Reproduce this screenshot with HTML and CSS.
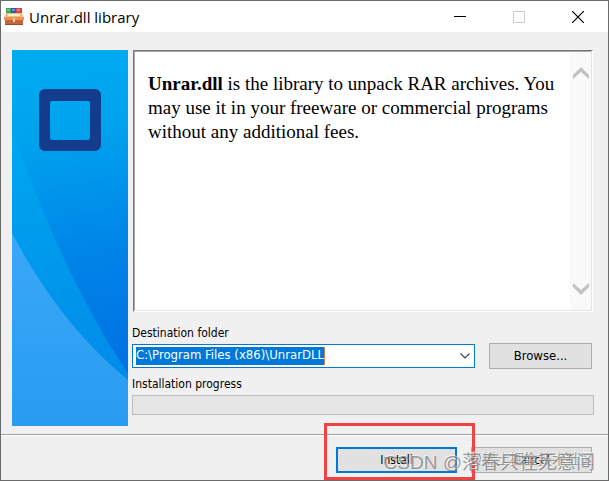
FILE: index.html
```html
<!DOCTYPE html>
<html lang="en">
<head>
<meta charset="utf-8">
<title>Unrar.dll library</title>
<link rel="stylesheet" href="styles.css">
</head>
<body>
<main class="window">
  <header class="titlebar">
    <svg class="app-icon" viewBox="0 0 20 20" aria-hidden="true">
      <path d="M2 1h16v8H2z" fill="#3f7d78"/>
      <path d="M2 1h5v8H2z" fill="#3aa655"/>
      <path d="M7 1h5v8H7z" fill="#3154c4"/>
      <path d="M12 1h5v8h-5z" fill="#d8434e"/>
      <path d="M3 3h3M8 3h3M13 3h3" stroke="#a9d7c9"/>
      <path d="M2 6h16l2 5H0z" fill="#f3bd79"/>
      <path d="M4 7h12v2H4z" fill="#fff0c4"/>
      <path d="M1 11h18v7H1z" fill="#c9643a"/>
      <path d="M0 10h20v3H0z" fill="#e7935a"/>
      <path d="M9 11h2v4H9z" fill="#f5d2a0"/>
      <path d="M1 17h18v1H1z" fill="#9c4930"/>
    </svg>
    <h1 class="title">Unrar.dll library</h1>
    <button class="caption" aria-label="Minimize"><svg viewBox="0 0 12 12"><path d="M0 5.5h12" stroke="#000"/></svg></button>
    <button class="caption" aria-label="Maximize" disabled><svg viewBox="0 0 12 12"><path d="M.5.5h11v11H.5z" fill="none" stroke="#ccc"/></svg></button>
    <button class="caption" aria-label="Close"><svg viewBox="0 0 12 12"><path d="M0 0l12 12M12 0L0 12" stroke="#000" stroke-width="1.2"/></svg></button>
  </header>

  <div class="content">
    <svg class="banner" viewBox="0 0 116 376" preserveAspectRatio="none" aria-hidden="true">
      <defs>
        <linearGradient id="deep" gradientUnits="userSpaceOnUse" x1="40" y1="0" x2="100" y2="330"><stop offset="0" stop-color="#00abf0"/><stop offset=".25" stop-color="#00a3ee"/><stop offset=".6" stop-color="#0085e8"/><stop offset="1" stop-color="#0070e2"/></linearGradient>
        <linearGradient id="mid" x1="0" y1="0" x2="0" y2="1"><stop offset="0" stop-color="#00a8f0"/><stop offset="1" stop-color="#008be9"/></linearGradient>
        <linearGradient id="light" x1="0" y1="0" x2="0" y2="1"><stop offset="0" stop-color="#3ba8f8"/><stop offset="1" stop-color="#279cf1"/></linearGradient>
      </defs>
      <path d="M0 0h116v376H0z" fill="url(#deep)"/>
      <path d="M0 78C26 155 66 250 116 323v12H0z" fill="url(#mid)"/>
      <path d="M0 183C31 242 68 290 116 330v46H0z" fill="url(#light)"/>
      <path fill="#143c8c" fill-rule="evenodd" d="M33 39h50a6 6 0 0 1 6 6v50a6 6 0 0 1-6 6H33a6 6 0 0 1-6-6V45a6 6 0 0 1 6-6zM40 51a2 2 0 0 0-2 2v35a2 2 0 0 0 2 2h36a2 2 0 0 0 2-2V53a2 2 0 0 0-2-2z"/>
    </svg>

    <div class="panel">
      <section class="license">
        <p class="message"><b>Unrar.dll</b> is the library to unpack RAR archives. You may use it in your freeware or commercial programs without any additional fees.</p>
        <div class="scrollbar">
          <svg viewBox="0 0 16 12"><path d="M0 12V8l8-8 8 8v4L8 5z" fill="#c2c2c2"/></svg>
          <svg viewBox="0 0 16 12"><path d="M0 0v4l8 8 8-8V0L8 7z" fill="#c2c2c2"/></svg>
        </div>
      </section>
      <label class="label" for="folder">Destination folder</label>
      <div class="folder-row">
        <div class="select-wrap">
          <select id="folder" class="folder"><button class="folder-face"><span class="selection">C:\Program Files (x86)\UnrarDLL</span></button><option>C:\Program Files (x86)\UnrarDLL</option></select>
          <svg class="chevron" viewBox="0 0 10 6"><path d="M.5.5L5 5 9.5.5" fill="none" stroke="#444" stroke-width="1.2"/></svg>
        </div>
        <button class="button browse">Browse...</button>
      </div>
      <span class="label progress-label" id="progress-label">Installation progress</span>
      <div class="progress" role="progressbar" aria-labelledby="progress-label" aria-valuenow="0"></div>
    </div>
  </div>

  <footer class="actions">
    <button class="button install">Install</button>
    <button class="button cancel">Cancel</button>
    <div class="highlight"></div>
    <span class="watermark watermark-small">@稀土掘金技术社区</span>
    <span class="watermark">CSDN @落春只在无意间</span>
  </footer>
</main>
</body>
</html>
```
FILE: styles.css
```css
* { box-sizing: border-box; }

body {
  margin: 0;
  background: #f0f0f0;
  color: #000;
  font: 12px/16px "DejaVu Sans Condensed", "DejaVu Sans", sans-serif;
}

.window {
  position: relative;
  display: flex;
  flex-direction: column;
  min-height: 100vh;
  border: 1px solid #6b6b6b;
  overflow: hidden;
}

.titlebar {
  display: flex;
  align-items: center;
  height: 31px;
  padding: 0 1px 0 3px;
  background: #fff;
}

.app-icon { width: 20px; height: 20px; }

.title {
  flex: 1;
  margin: 0 0 0 5px;
  font: 400 15px/20px "Open Sans", sans-serif;
}

.caption {
  display: grid;
  place-items: center;
  width: 59px;
  height: 30px;
  padding: 0;
  border: 0;
  background: none;
}

.caption svg { width: 12px; height: 12px; }

.content {
  display: flex;
  flex: 1;
  gap: 4px;
  padding: 18px 14px 8px 11px;
}

.banner { width: 116px; height: 376px; flex: none; }

.panel { flex: 1; display: flex; flex-direction: column; }

.license {
  display: flex;
  height: 262px;
  margin: 0 1px;
  border: 1px solid;
  border-color: #777 #fff #fff #777;
  background: #fff;
  box-shadow: inset -1px -1px #e3e3e3, inset 1px 1px #aaa;
}

.message {
  flex: 1;
  margin: 0;
  padding: 21px 4px 21px 14px;
  font: 19px/24px "Liberation Serif", serif;
}

.scrollbar {
  display: flex;
  flex-direction: column;
  justify-content: space-between;
  align-items: center;
  width: 21px;
  margin: 1px;
  padding: 15px 0;
  background: #f9f9f9;
}

.scrollbar svg { width: 16px; height: 12px; }

.label { display: block; margin-top: 13px; }

.folder-row { display: flex; align-items: center; gap: 14px; margin-top: 2px; padding-right: 2px; }

.select-wrap { position: relative; flex: 1; }

.folder {
  appearance: base-select;
  display: block;
  width: 100%;
  height: 24px;
  min-height: 0;
  padding: 2px 3px;
  border: 1px solid #0078d7;
  border-radius: 0;
  outline: 0;
  background: #fff;
  color: #000;
  font: inherit;
  font-size: 13px;
}

.folder::picker-icon { display: none; }

.folder-face { padding: 0; border: 0; background: none; font: inherit; }

.selection {
  display: block;
  border-right: 1px solid #d08050;
  background: #0078d7;
  color: #fff;
}

.chevron {
  position: absolute;
  top: 9px;
  right: 5px;
  width: 10px;
  height: 6px;
  pointer-events: none;
}

.button {
  height: 26px;
  padding: 0;
  border: 1px solid #adadad;
  border-radius: 0;
  background: #e1e1e1;
  color: #000;
  font: inherit;
}

.browse { width: 103px; font-size: 13px; }

.progress-label { margin-top: 7px; }

.progress {
  height: 20px;
  margin-top: 3px;
  border: 1px solid #bcbcbc;
  background: #e6e6e6;
}

.actions {
  position: relative;
  display: flex;
  justify-content: flex-end;
  gap: 14px;
  height: 46px;
  padding: 12px 16px 0;
  border-top: 1px solid #a0a0a0;
  box-shadow: inset 0 1px #fff;
}

.install { width: 121px; border: 2px solid #0078d7; }

.cancel { width: 121px; }

.highlight {
  position: absolute;
  top: -12px;
  right: 133px;
  bottom: 0;
  width: 151px;
  border: 3px solid #ef4444;
}

.watermark {
  position: absolute;
  top: 16px;
  right: 13px;
  color: rgba(130, 130, 130, 0.8);
  font: 19px/24px "Liberation Sans", "Noto Sans CJK SC", sans-serif;
  text-shadow: -1px -1px rgba(255, 255, 255, 0.6);
  white-space: nowrap;
  pointer-events: none;
}

.watermark-small { font-size: 14px; top: 12px; right: 14px; }
```
